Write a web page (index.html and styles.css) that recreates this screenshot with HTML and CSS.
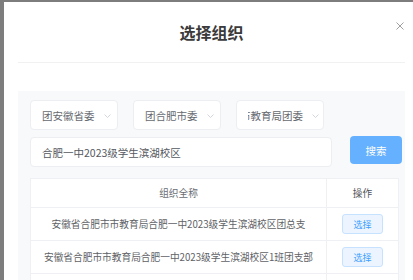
FILE: index.html
```html
<!DOCTYPE html>
<html lang="zh">
<head>
<meta charset="utf-8">
<link rel="stylesheet" href="styles.css">
</head>
<body>
<div class="modal">
  <div class="header">
    <div class="title">选择组织</div>
    <span class="close">
      <svg width="8" height="8" viewBox="0 0 8 8"><path d="M0.5 0.5L7.5 7.5M7.5 0.5L0.5 7.5" stroke="#a0a0a0" stroke-width="1" fill="none"/></svg>
    </span>
  </div>
  <div class="panel">
    <div class="selects">
      <div class="select"><span class="sel-text">团安徽省委</span><span class="chev"><svg width="7" height="4" viewBox="0 0 7 4"><path d="M0.5 0.5L3.5 3.5L6.5 0.5" stroke="#c8ccd3" stroke-width="0.8" fill="none"/></svg></span></div>
      <div class="select"><span class="sel-text">团合肥市委</span><span class="chev"><svg width="7" height="4" viewBox="0 0 7 4"><path d="M0.5 0.5L3.5 3.5L6.5 0.5" stroke="#c8ccd3" stroke-width="0.8" fill="none"/></svg></span></div>
      <div class="select"><span class="sel-text clip"><span>市教育局团委</span></span><span class="chev"><svg width="7" height="4" viewBox="0 0 7 4"><path d="M0.5 0.5L3.5 3.5L6.5 0.5" stroke="#c8ccd3" stroke-width="0.8" fill="none"/></svg></span></div>
    </div>
    <div class="search-row">
      <div class="input">合肥一中2023级学生滨湖校区</div>
      <button class="btn-search">搜索</button>
    </div>
    <div class="table">
      <div class="tr th">
        <div class="c1">组织全称</div>
        <div class="c2">操作</div>
      </div>
      <div class="tr">
        <div class="c1">安徽省合肥市市教育局合肥一中2023级学生滨湖校区团总支</div>
        <div class="c2"><button class="btn-pick">选择</button></div>
      </div>
      <div class="tr">
        <div class="c1">安徽省合肥市市教育局合肥一中2023级学生滨湖校区1班团支部</div>
        <div class="c2"><button class="btn-pick">选择</button></div>
      </div>
      <div class="tr last">
        <div class="c1"></div>
        <div class="c2"></div>
      </div>
    </div>
  </div>
</div>
</body>
</html>
```
FILE: styles.css
```css
html, body {
  margin: 0;
  padding: 0;
}
body {
  background: #7d7d7d;
  width: 413px;
  height: 280px;
  overflow: hidden;
  font-family: "Noto Sans CJK SC", "Noto Sans", sans-serif;
}
.modal {
  position: relative;
  margin: 2px 0 0 4px;
  width: 387px;
  padding: 0 14px;
  height: 278px;
  overflow: hidden;
  background: #fff;
}
.header {
  height: 60px;
  border-bottom: 1px solid #f0f1f3;
  display: flex;
  align-items: center;
  justify-content: center;
}
.title {
  font-size: 16px;
  font-weight: 700;
  color: #3a3a3a;
  line-height: 20px;
  margin-top: -1px;
}
.close {
  position: absolute;
  left: 392px;
  top: 20px;
  width: 8px;
  height: 8px;
  display: flex;
}
.panel {
  margin-top: 28px;
  background: #f8f9fb;
  padding: 9px 3px 0 12px;
  height: 180px;
}
.selects {
  display: flex;
  gap: 15px;
}
.select {
  height: 28px;
  background: #fff;
  border: 1px solid #eceef2;
  border-radius: 4px;
  display: flex;
  align-items: center;
  padding: 0 0 0 11px;
  box-sizing: content-box;
  width: 75px;
  font-size: 10.5px;
  color: #666a70;
}
.sel-text {
  white-space: nowrap;
}
.sel-text.clip {
  width: 55px;
  overflow: hidden;
  display: flex;
  justify-content: flex-end;
  margin-left: 0;
}
.chev {
  display: flex;
  margin-left: 9px;
  margin-top: 1px;
}
.search-row {
  display: flex;
  align-items: flex-start;
  margin-top: 7px;
  gap: 18px;
}
.input {
  width: 289px;
  height: 28px;
  background: #fff;
  border: 1px solid #eceef2;
  border-radius: 4px;
  padding-left: 11px;
  display: flex;
  align-items: center;
  font-size: 10.5px;
  color: #55585e;
}
.btn-search {
  width: 52px;
  height: 28px;
  margin-top: -1px;
  border: none;
  border-radius: 4px;
  background: #66b1ff;
  color: #fff;
  font-family: inherit;
  font-size: 10.5px;
  padding: 0;
}
.table {
  margin-top: 11px;
  width: 369px;
  background: #fff;
  border-left: 1px solid #eef0f4;
  border-top: 1px solid #eef0f4;
  border-right: 1px solid #eef0f4;
  box-sizing: border-box;
}
.tr {
  display: flex;
  height: 33px;
  border-bottom: 1px solid #eef0f4;
  box-sizing: border-box;
  font-size: 9.7px;
  color: #606266;
}
.tr.th {
  height: 29px;
}
.tr.last {
  height: 10px;
  border-bottom: none;
}
.th .c1 { color: #6a6d73; }
.th .c2 { color: #505359; }
.c1 {
  width: 295px;
  border-right: 1px solid #eef0f4;
  display: flex;
  align-items: center;
  justify-content: center;
  white-space: nowrap;
}
.c2 {
  flex: 1;
  display: flex;
  align-items: center;
  justify-content: center;
}
.btn-pick {
  width: 41px;
  height: 20px;
  padding: 0;
  background: #ecf5ff;
  border: 1px solid #c6e2ff;
  border-radius: 3px;
  color: #409eff;
  font-family: inherit;
  font-size: 9px;
}
```
